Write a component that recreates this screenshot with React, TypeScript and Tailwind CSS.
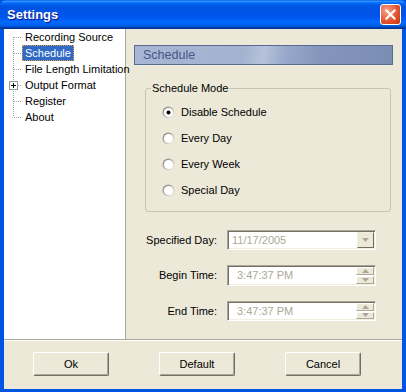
import React, { useState } from 'react';

const FONT = { fontFamily: '"Liberation Sans", Arial, sans-serif' };

const treeItems = ['Recording Source', 'Schedule', 'File Length Limitation', 'Output Format', 'Register', 'About'];
const modes = ['Disable Schedule', 'Every Day', 'Every Week', 'Special Day'];

function TreeGutter({ first, last, plus }: { first: boolean; last: boolean; plus?: boolean }) {
  return (
    <svg width="18" height="16" className="shrink-0">
      <line x1="9.5" y1={first ? 8 : 0} x2="9.5" y2={last ? 8 : 16} stroke="#a0a0a0" strokeDasharray="1 1" />
      <line x1="10" y1="8.5" x2="18" y2="8.5" stroke="#a0a0a0" strokeDasharray="1 1" />
      {plus && (
        <g>
          <rect x="5.5" y="4.5" width="8" height="8" fill="#fff" stroke="#919b9c" />
          <line x1="7" y1="8.5" x2="12" y2="8.5" stroke="#000" />
          <line x1="9.5" y1="6" x2="9.5" y2="11" stroke="#000" />
        </g>
      )}
    </svg>
  );
}

function Radio({ checked }: { checked: boolean }) {
  return (
    <svg width="13" height="13" className="shrink-0">
      <defs>
        <linearGradient id="rg" x1="0" y1="0" x2="1" y2="1">
          <stop offset="0" stopColor="#7a7a72" />
          <stop offset="0.6" stopColor="#c8c6bc" />
          <stop offset="1" stopColor="#ffffff" />
        </linearGradient>
      </defs>
      <circle cx="6.5" cy="6.5" r="6" fill="url(#rg)" />
      <circle cx="6.5" cy="6.5" r="4.6" fill="#ffffff" />
      {checked && <circle cx="6.5" cy="6.5" r="2" fill="#000" />}
    </svg>
  );
}

function Tri({ up }: { up?: boolean }) {
  return (
    <svg width="7" height="4">
      <polygon points={up ? '3.5,0 7,4 0,4' : '0,0 7,0 3.5,4'} fill="#aca899" />
    </svg>
  );
}

function Field({ value, kind }: { value: string; kind: 'combo' | 'spin' }) {
  return (
    <div className="h-full border border-t-[#aca899] border-l-[#aca899] border-b-white border-r-white">
      <div className="h-full flex items-center bg-white shadow-[inset_1px_1px_0_#716f64,inset_-1px_-1px_0_#f1efe2] pr-[1px]">
        <span className={`flex-1 text-[#aca899] ${kind === 'combo' ? 'pl-[4px]' : 'pl-[9px]'}`}>{value}</span>
        {kind === 'combo' ? (
          <div className="w-[17px] h-[16px] flex items-center justify-center bg-[#ece9d8] border border-t-[#f1efe2] border-l-[#f1efe2] border-b-[#716f64] border-r-[#716f64]">
            <Tri />
          </div>
        ) : (
          <div className="w-[18px] h-full flex flex-col justify-center gap-[1px] py-[1px]">
            <div className="h-[8px] flex items-center justify-center bg-[#ece9d8] border border-t-white border-l-white border-b-[#aca899] border-r-[#aca899]">
              <Tri up />
            </div>
            <div className="h-[8px] flex items-center justify-center bg-[#ece9d8] border border-t-white border-l-white border-b-[#aca899] border-r-[#aca899]">
              <Tri />
            </div>
          </div>
        )}
      </div>
    </div>
  );
}

function Btn({ label }: { label: string }) {
  return (
    <button className="w-[76px] h-[24px] rounded-[2px] bg-[#ece9d8] border border-t-white border-l-white border-b-[#716f64] border-r-[#716f64] shadow-[inset_-1px_-1px_0_#aca899] text-[11px] text-black">
      {label}
    </button>
  );
}

export default function App() {
  const [selected, setSelected] = useState('Schedule');
  const [mode, setMode] = useState('Disable Schedule');

  return (
    <div className="w-[406px] h-[392px] flex flex-col bg-[#0054e3] text-[11px] text-black" style={FONT}>
      {/* Title bar */}
      <div className="h-[29px] flex items-center pl-[7px] pr-[5px] bg-[linear-gradient(to_bottom,#0058ee_0%,#3593ff_4%,#288eff_6%,#127dff_8%,#036ffc_10%,#0262ee_14%,#0057e5_20%,#0054e3_24%,#0055eb_56%,#005bf5_66%,#026afe_76%,#0062ef_86%,#0052d6_92%,#0040ab_94%,#003092_100%)] rounded-t-[6px]">
        <span className="text-white font-bold text-[13px] [text-shadow:1px_1px_0_#0f1089]">Settings</span>
        <div className="ml-auto w-[21px] h-[21px] rounded-[3px] border border-white bg-[radial-gradient(circle_at_30%_30%,#f5a38a,#e2512c_60%,#c2350f)] flex items-center justify-center">
          <svg width="11" height="11" viewBox="0 0 11 11">
            <path d="M1.5 1.5 L9.5 9.5 M9.5 1.5 L1.5 9.5" stroke="#fff" strokeWidth="2.2" strokeLinecap="square" />
          </svg>
        </div>
      </div>

      {/* Body */}
      <div className="h-[360px] mx-[4px] bg-[#ece9d8] flex flex-col">
        <div className="h-[310px] flex">
          {/* Tree */}
          <div className="w-[122px] bg-white border-r border-[#aca899] flex flex-col">
            {treeItems.map((item, i) => (
              <div key={item} className="h-[16px] flex items-center" onClick={() => setSelected(item)}>
                <TreeGutter first={i === 0} last={i === treeItems.length - 1} plus={item === 'Output Format'} />
                <span
                  className={`h-[16px] flex items-center px-[2px] whitespace-nowrap border border-dotted ${
                    selected === item ? 'bg-[#316ac5] text-white border-[#e0a040]' : 'border-transparent'
                  }`}
                >
                  {item}
                </span>
              </div>
            ))}
          </div>

          {/* Right panel */}
          <div className="flex-1 pt-[16px] pl-[8px] pr-[9px] flex flex-col">
            <div className="h-[20px] flex items-center pl-[8px] border border-[#5a6b93] bg-[linear-gradient(100deg,#a8b6d3_0%,#a3b2d0_42%,#b6c2da_50%,#98a9cb_58%,#8495bb_72%,#7a8db3_100%)] text-[12.5px] text-[#46578a]">
              Schedule
            </div>

            <fieldset className="mt-[17px] ml-[11px] mr-[2px] border border-[#c8c5b5] rounded-[3px] pb-[8px] pt-[4px] px-0">
              <legend className="ml-[5px] px-[1px] leading-[13px]">Schedule Mode</legend>
              {modes.map((m) => (
                <div key={m} className="h-[26px] flex items-center pl-[16px] gap-[6px]" onClick={() => setMode(m)}>
                  <Radio checked={mode === m} />
                  <span>{m}</span>
                </div>
              ))}
            </fieldset>

            <div className="mt-[18px] grid grid-cols-[83px_149px] gap-x-[10px]">
              <span className="h-[20px] flex items-center justify-end">Specified Day:</span>
              <div className="h-[20px]">
                <Field value="11/17/2005" kind="combo" />
              </div>
              <span className="mt-[15px] h-[21px] flex items-center justify-end">Begin Time:</span>
              <div className="mt-[15px] h-[21px]">
                <Field value="3:47:37 PM" kind="spin" />
              </div>
              <span className="mt-[15px] h-[20px] flex items-center justify-end">End Time:</span>
              <div className="mt-[15px] h-[20px]">
                <Field value="3:47:37 PM" kind="spin" />
              </div>
            </div>
          </div>
        </div>

        {/* Divider */}
        <div className="h-[2px] border-t border-[#aca899] bg-white" />

        {/* Buttons */}
        <div className="flex-1 flex items-start pt-[11px] pl-[29px] gap-[50px]">
          <Btn label="Ok" />
          <Btn label="Default" />
          <Btn label="Cancel" />
        </div>
      </div>
      <div className="h-[3px]" />
    </div>
  );
}
